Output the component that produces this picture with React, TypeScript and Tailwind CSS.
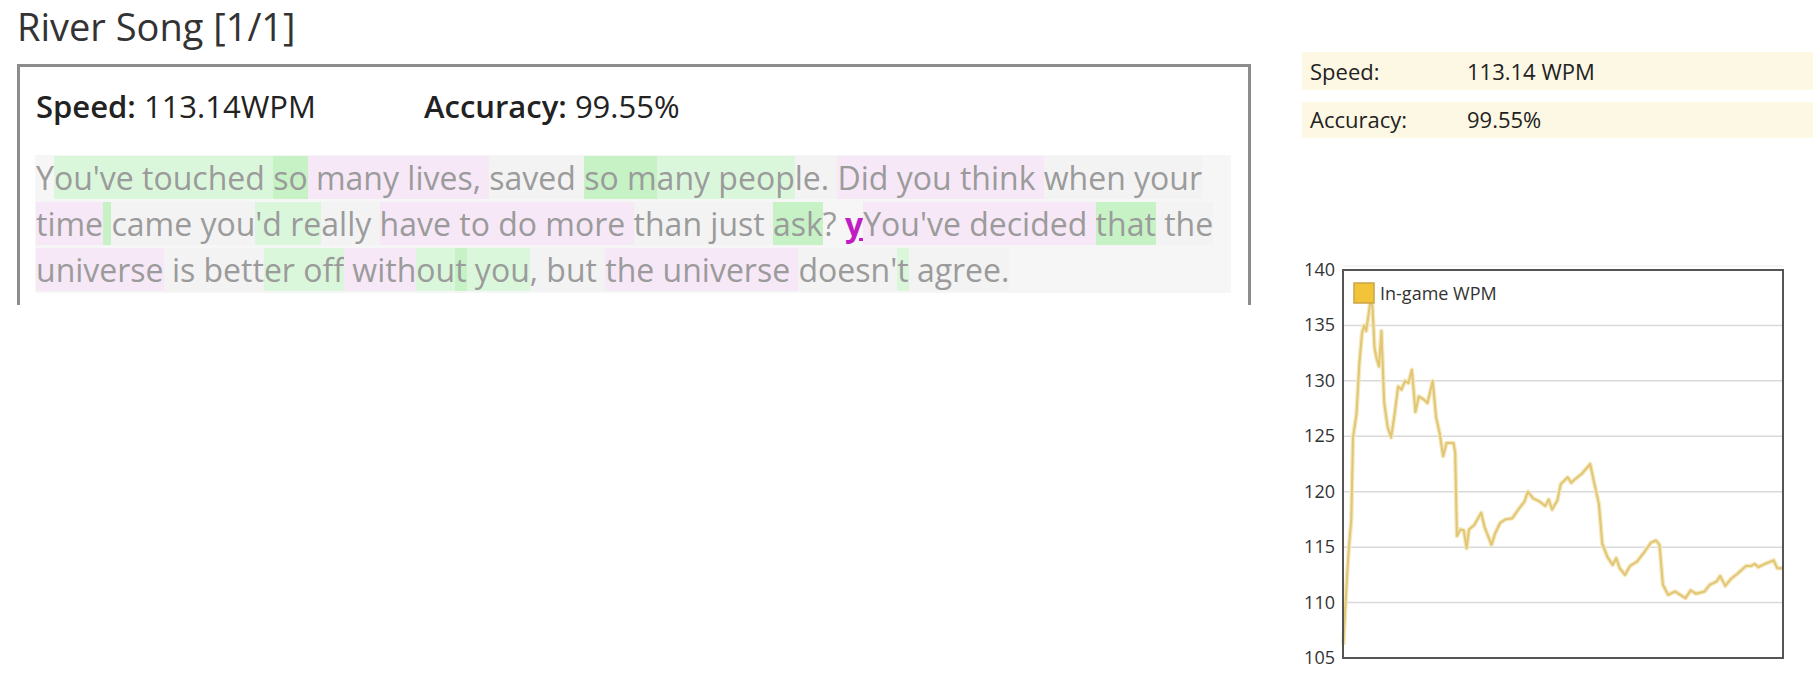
import React from "react";

type Seg = [string, string];

// per-character highlight of the typed passage
const lines: Seg[][] = [
  [
    ["Y", ""],
    ["ou've touched ", "g"],
    ["so", "G"],
    [" many ", "p"],
    ["lives, ", "p"],
    ["saved ", "f"],
    ["so m", "G"],
    ["any peop", "g"],
    ["le. ", "f"],
    ["Did you think ", "p"],
    ["when your", "f"],
  ],
  [
    ["time", "p"],
    [" ", "G"],
    ["came you", "f"],
    ["'d re", "g"],
    ["ally ", "f"],
    ["have to do more ", "p"],
    ["than just ", "f"],
    ["ask", "G"],
    ["? ", ""],
    ["y", "err"],
    ["You've decided ", "p"],
    ["that", "G"],
    [" the", "f"],
  ],
  [
    ["universe", "p"],
    [" is bett", "f"],
    ["er off", "g"],
    [" with", "p"],
    ["ou", "g"],
    ["t", "G"],
    [" you", "g"],
    [", but ", "f"],
    ["the universe ", "p"],
    ["doesn'", "f"],
    ["t", "g"],
    [" agree.", "f"],
  ],
];

const segClass: Record<string, string> = {
  "": "",
  g: "bg-[#dbf7db]",
  G: "bg-[#c6f2c6]",
  p: "bg-[#f7e8f7]",
  f: "bg-[#f3f3f3]",
  err: "text-[#c21dc2] font-bold underline underline-offset-2",
};

// [x in crop px, wpm]
const wpm: [number, number][] = [
  [212, 106.2], [222, 112], [228, 115], [235, 117.5], [240, 124.9], [250, 127], [258, 131.5],
  [266, 134.3], [272, 135], [278, 134.5], [285, 136], [290, 137.2], [296, 136.8], [302, 133],
  [308, 132], [315, 131.3], [322, 134.5], [330, 128], [340, 125.8], [350, 124.9], [360, 127],
  [370, 129.5], [380, 129.2], [390, 130], [400, 129.8], [410, 131], [420, 127.2], [430, 128.6],
  [445, 128.3], [455, 128], [470, 130], [480, 126.7], [490, 125.3], [500, 123.2], [510, 124.4],
  [530, 124.4], [535, 123.5], [540, 116], [550, 116.6], [560, 116.5], [568, 114.9], [575, 116.6],
  [590, 117], [610, 118.1], [620, 116.8], [640, 115.2], [650, 116.2], [665, 117.2], [680, 117.5],
  [700, 117.6], [720, 118.5], [735, 119.1], [745, 120], [760, 119.4], [780, 119.1], [795, 118.7],
  [805, 119.3], [815, 118.4], [830, 119.2], [840, 120.7], [860, 121.3], [870, 120.8], [880, 121.1],
  [900, 121.6], [925, 122.5], [935, 121], [950, 118.9], [960, 115.3], [975, 114.1], [990, 113.4],
  [1000, 114], [1010, 113.1], [1025, 112.5], [1040, 113.3], [1060, 113.7], [1080, 114.5],
  [1100, 115.4], [1115, 115.6], [1125, 115.2], [1135, 111.6], [1150, 110.7], [1170, 111],
  [1185, 110.7], [1200, 110.4], [1215, 111.1], [1230, 110.8], [1255, 111], [1270, 111.6],
  [1290, 111.9], [1300, 112.4], [1315, 111.5], [1330, 112.1], [1350, 112.6], [1375, 113.3],
  [1390, 113.3], [1400, 113.5], [1410, 113.2], [1430, 113.5], [1455, 113.8], [1465, 113.1],
  [1482, 113.1],
];

const PX = 48;
const PY = 20;
const PW = 440;
const PH = 388;

function WpmChart() {
  const ticks = [140, 135, 130, 125, 120, 115, 110, 105];
  const yOf = (v: number) => PY + ((140 - v) * PH) / 35;
  const pts = wpm
    .map(([d, v]) => `${(PX + (d - 211) / 2.888).toFixed(1)},${yOf(v).toFixed(1)}`)
    .join(" ");

  return (
    <svg width="511" height="423" className="block">
      {ticks.map((t) => (
        <g key={t}>
          {t !== 140 && t !== 105 && (
            <line x1={PX} x2={PX + PW} y1={yOf(t)} y2={yOf(t)} stroke="#d9d9d9" strokeWidth="1.5" />
          )}
          <text
            x={40}
            y={yOf(t) + 6}
            textAnchor="end"
            fontSize="18"
            fill="#333"
            fontFamily="'Open Sans', sans-serif"
          >
            {t}
          </text>
        </g>
      ))}
      <line x1={PX} x2={PX + PW} y1={PY - 4} y2={PY - 4} stroke="#eeeeee" strokeWidth="1" />
      <polyline points={pts} fill="none" stroke="#f5e8bd" strokeWidth="4.5" strokeLinejoin="round" />
      <polyline points={pts} fill="none" stroke="#e0c675" strokeWidth="2" strokeLinejoin="round" />
      <rect x={PX} y={PY} width={PW} height={PH} fill="none" stroke="#555" strokeWidth="2" />
      <rect x={59} y={33} width={20} height={20} fill="#f1c43a" stroke="#c9a646" strokeWidth="1.5" />
      <text x={85} y={50} fontSize="18" fill="#333" fontFamily="'Open Sans', sans-serif">
        In-game WPM
      </text>
    </svg>
  );
}

export default function App() {
  return (
    <div className="flex w-[1813px] h-[673px] overflow-hidden bg-white font-['Open_Sans',sans-serif]">
      <div className="w-[1285px] shrink-0 pl-[17px]">
        <h1 className="text-[38px] leading-[52px] text-[#333]">River Song [1/1]</h1>
        <div className="mt-[12px] h-[241px] w-[1234px] border-x-[3px] border-t-[3px] border-[#8c8c8c] pl-[15px]">
          <div className="flex pt-[19px] text-[31px] leading-[40px] text-[#222]">
            <div className="w-[389px] pl-[1px]">
              <span className="font-semibold">Speed:</span> 113.14WPM
            </div>
            <div>
              <span className="font-semibold">Accuracy:</span> 99.55%
            </div>
          </div>
          <div className="mt-[29px] h-[138px] w-[1196px] bg-[#f6f6f6] pl-[1px] text-[32px] leading-[46px] text-[#9b9b9b]">
            {lines.map((line, i) => (
              <div key={i} className="whitespace-pre">
                {line.map(([t, k], j) => (
                  <span key={j} className={segClass[k]}>
                    {t}
                  </span>
                ))}
              </div>
            ))}
          </div>
        </div>
      </div>

      <div className="flex-1 pt-[52px]">
        <div className="ml-[17px] flex flex-col gap-[12px] text-[22px] text-[#222]">
          <div className="flex h-[38px] bg-[#fdf8e4] pl-[8px] pt-[2px] leading-[34px]">
            <span className="w-[157px]">Speed:</span>
            <span>113.14 WPM</span>
          </div>
          <div className="flex h-[36px] bg-[#fdf8e4] pl-[8px] leading-[34px]">
            <span className="w-[157px]">Accuracy:</span>
            <span>99.55%</span>
          </div>
        </div>
        <div className="mt-[112px] ml-[10px]">
          <WpmChart />
        </div>
      </div>
    </div>
  );
}
